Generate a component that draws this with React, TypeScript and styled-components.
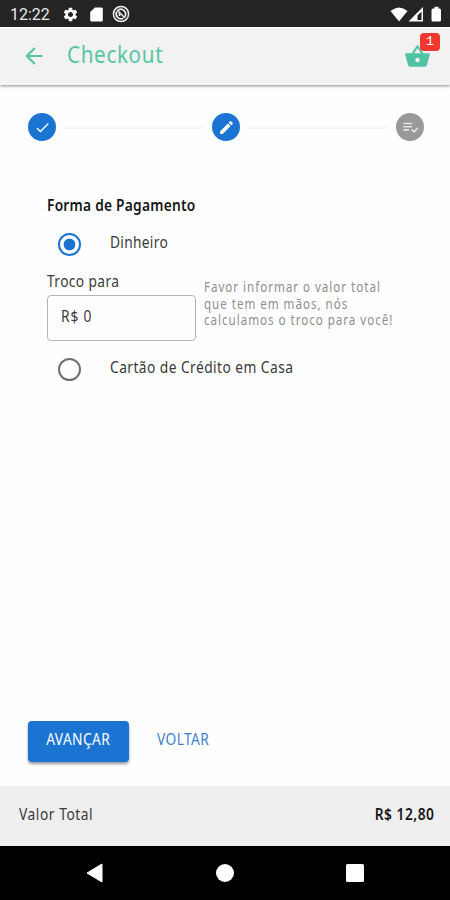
import React from "react";
import styled, { createGlobalStyle } from "styled-components";
import {
  MdArrowBack,
  MdCheck,
  MdEdit,
  MdPlaylistAddCheck,
  MdSettings,
  MdShoppingBasket,
} from "react-icons/md";

const GlobalStyle = createGlobalStyle`
  * { box-sizing: border-box; }
  body { margin: 0; background: #fff; font-family: "Noto Sans", sans-serif; }
  button, input { font: inherit; }
`;

const Screen = styled.div`
  width: 450px;
  height: 900px;
  display: flex;
  flex-direction: column;
  overflow: hidden;
  background: #fefefe;
`;

const StatusBar = styled.div`
  height: 27px;
  flex: none;
  display: flex;
  align-items: center;
  justify-content: space-between;
  padding: 1px 8px 0 10px;
  background: #242424;
  color: #fff;
`;

const StatusGroup = styled.div`
  display: flex;
  align-items: center;
  height: 100%;
`;

const Clock = styled.span`
  width: 52px;
  font: 400 16px/27px Roboto, sans-serif;
  color: #e8e8e8;
`;

const Slot = styled.span<{ $left?: number }>`
  display: flex;
  margin-left: ${(p) => p.$left ?? 0}px;
`;

/* Narrowed lettering; the scale is anchored on the side the text aligns to. */
const Label = styled.span<{
  $size?: number;
  $line?: number;
  $scale?: number;
  $spacing?: number;
  $color?: string;
  $weight?: number;
  $anchor?: "left" | "center" | "right";
}>`
  display: block;
  white-space: nowrap;
  font-size: ${(p) => p.$size ?? 16}px;
  line-height: ${(p) => p.$line ?? 20}px;
  letter-spacing: ${(p) => p.$spacing ?? 0.45}px;
  font-weight: ${(p) => p.$weight ?? 400};
  color: ${(p) => p.$color ?? "#3a3a3a"};
  transform: scaleX(${(p) => p.$scale ?? 0.86});
  transform-origin: ${(p) => p.$anchor ?? "left"} center;
`;

const HintLine = styled(Label).attrs({
  $size: 13.5,
  $line: 16.5,
  $color: "#8f8f8f",
  $spacing: 1.13,
})``;

const AppBar = styled.header`
  height: 58px;
  flex: none;
  display: flex;
  align-items: flex-start;
  justify-content: space-between;
  padding: 0 10px 0 21px;
  background: #f2f2f2;
  border-top: 1px solid #fff;
  box-shadow: 0 1px 3px rgba(0, 0, 0, 0.45);
`;

const TitleGroup = styled.div`
  display: flex;
  gap: 20px;
  padding-top: 11px;
  color: #58c5a2;
`;

const BackButton = styled.button`
  display: flex;
  padding: 4px 0 0;
  border: 0;
  background: none;
  color: inherit;
`;

const CartButton = styled.button`
  position: relative;
  width: 36px;
  height: 44px;
  padding: 15px 0 0;
  border: 0;
  background: none;
  color: #50c3a4;
  text-align: left;
`;

const Badge = styled.span`
  position: absolute;
  top: 5px;
  right: 0;
  width: 20px;
  height: 18px;
  border-radius: 4px;
  background: #f0382f;
  color: #fff;
  font: 13px/17px "Liberation Mono", monospace;
  text-align: center;
`;

const Main = styled.main`
  flex: 1;
  display: flex;
  flex-direction: column;
  padding: 28px 26px 24px 28px;
`;

const Stepper = styled.div`
  display: flex;
  align-items: center;
  justify-content: space-between;
  height: 28px;
`;

const Step = styled.span<{ $idle?: boolean }>`
  width: 28px;
  height: 28px;
  border-radius: 50%;
  display: flex;
  align-items: center;
  justify-content: center;
  color: ${(p) => (p.$idle ? "#e4e4e4" : "#fff")};
  background: ${(p) => (p.$idle ? "#999" : "#1b74d2")};
`;

const Connector = styled.span`
  width: 140px;
  height: 3px;
  background: #f7f7f7;
`;

const Form = styled.form`
  flex: 1;
  padding: 54px 0 0 19px;
`;

const FormHeading = styled.div`
  margin-bottom: 17px;
`;

const Option = styled.label`
  display: flex;
  align-items: center;
  height: 24px;
  padding-left: 11px;
  gap: 29px;
`;

const Radio = styled.span<{ $checked?: boolean }>`
  width: 23px;
  height: 23px;
  border-radius: 50%;
  border: 2px solid ${(p) => (p.$checked ? "#1b74d2" : "#707070")};
  background: ${(p) =>
    p.$checked ? "radial-gradient(circle, #1b74d2 5.5px, transparent 6.2px)" : "none"};
`;

const OptionText = styled.span`
  margin-top: -4px;
`;

const ChangeRow = styled.div`
  display: flex;
  gap: 8px;
  height: 70px;
  margin: 15px 0 16px;
`;

const Field = styled.div`
  flex: none;
  width: 149px;
`;

const FieldBox = styled.div`
  height: 46px;
  margin-top: 4px;
  padding: 10px 0 0 13px;
  border: 1px solid #b5b5b5;
  border-radius: 4px;
`;

const Hint = styled.div`
  padding-top: 8px;
`;

const Actions = styled.div`
  display: flex;
  align-items: center;
  gap: 28px;
`;

const PrimaryButton = styled.button`
  width: 101px;
  height: 41px;
  padding: 0 0 5px;
  border: 0;
  border-radius: 4px;
  display: flex;
  align-items: center;
  justify-content: center;
  background: #1b74d2;
  box-shadow: 0 2px 3px rgba(0, 0, 0, 0.4);
`;

const TextButton = styled.button`
  padding: 0 0 5px;
  border: 0;
  background: none;
`;

const TotalBar = styled.footer`
  height: 60px;
  flex: none;
  display: flex;
  justify-content: space-between;
  padding: 18px 16px 0 19px;
  background: #efefef;
`;

const NavBar = styled.nav`
  height: 54px;
  flex: none;
  display: flex;
  align-items: center;
  justify-content: space-between;
  padding: 0 86px;
  background: #000;
`;

export default function App() {
  return (
    <>
      <GlobalStyle />
      <Screen>
        <StatusBar>
          <StatusGroup>
            <Clock>12:22</Clock>
            <MdSettings size={17} />
            <Slot $left={11}>
              <svg width="13" height="15" viewBox="0 0 13 15">
                <path d="M5 .5H11.500Q12.800 .5 12.800 2V13Q12.800 14.500 11.500 14.500H1.600Q.2 14.500 .2 13V5Z" fill="#fff" />
              </svg>
            </Slot>
            <Slot $left={9}>
              <svg width="18" height="18" viewBox="0 0 18 18" fill="none" stroke="#eee">
                <circle cx="9" cy="9" r="7.600" strokeWidth="1.500" />
                <path d="M6 5.200A4.800 4.800 0 0 1 12.600 12M11.200 13.200A4.800 4.800 0 0 1 4.800 6.600" strokeWidth="1.700" />
                <path d="M5 5L13 13M7.500 11V7.500L10.500 10.500" strokeWidth="1.500" />
              </svg>
            </Slot>
          </StatusGroup>
          <svg width="52" height="17" viewBox="0 0 52 17" fill="#fff">
            <path d="M0.500 5Q9-2 17.500 5L9 15.500Z" />
            <path d="M33 1V15.500H18.500Z" />
            <path d="M27.500 9.500L31.500 5.500V14H27.500Z" fill="#242424" />
            <path d="M44.500 .8H48.500V2.500H49.500Q51 2.500 51 4V14Q51 15.500 49.500 15.500H43Q41.500 15.500 41.500 14V4Q41.500 2.500 43 2.500H44.500Z" />
          </svg>
        </StatusBar>

        <AppBar>
          <TitleGroup>
            <BackButton aria-label="Voltar">
              <MdArrowBack size={26} />
            </BackButton>
            <Label $size={24} $line={30} $spacing={0.75} $color="#58c5a2">Checkout</Label>
          </TitleGroup>
          <CartButton aria-label="Carrinho">
            <MdShoppingBasket size={27} />
            <Badge>1</Badge>
          </CartButton>
        </AppBar>

        <Main>
          <Stepper>
            <Step><MdCheck size={17} /></Step>
            <Connector />
            <Step><MdEdit size={17} /></Step>
            <Connector />
            <Step $idle><MdPlaylistAddCheck size={19} /></Step>
          </Stepper>

          <Form>
            <FormHeading>
              <Label $weight={600} $spacing={0.28} $color="#161616">Forma de Pagamento</Label>
            </FormHeading>
            <Option>
              <Radio $checked />
              <OptionText><Label $spacing={0.35}>Dinheiro</Label></OptionText>
            </Option>
            <ChangeRow>
              <Field>
                <Label>Troco para</Label>
                <FieldBox><Label $spacing={1}>R$ 0</Label></FieldBox>
              </Field>
              <Hint>
                <HintLine>Favor informar o valor total</HintLine>
                <HintLine>que tem em mãos, nós</HintLine>
                <HintLine>calculamos o troco para você!</HintLine>
              </Hint>
            </ChangeRow>
            <Option>
              <Radio />
              <OptionText><Label $spacing={0.52}>Cartão de Crédito em Casa</Label></OptionText>
            </Option>
          </Form>

          <Actions>
            <PrimaryButton>
              <Label $color="#fff" $anchor="center">AVANÇAR</Label>
            </PrimaryButton>
            <TextButton>
              <Label $color="#3d80cf">VOLTAR</Label>
            </TextButton>
          </Actions>
        </Main>

        <TotalBar>
          <Label $spacing={0.65}>Valor Total</Label>
          <Label $weight={600} $spacing={0.6} $color="#161616" $anchor="right">R$ 12,80</Label>
        </TotalBar>

        <NavBar>
          <svg width="17" height="20" viewBox="0 0 17 20">
            <path d="M16 1V19L1 10Z" fill="#fff" stroke="#fff" strokeLinejoin="round" />
          </svg>
          <svg width="18" height="18" viewBox="0 0 18 18">
            <circle cx="9" cy="9" r="9" fill="#fff" />
          </svg>
          <svg width="18" height="18" viewBox="0 0 18 18">
            <rect width="18" height="18" rx="1.500" fill="#fff" />
          </svg>
        </NavBar>
      </Screen>
    </>
  );
}
